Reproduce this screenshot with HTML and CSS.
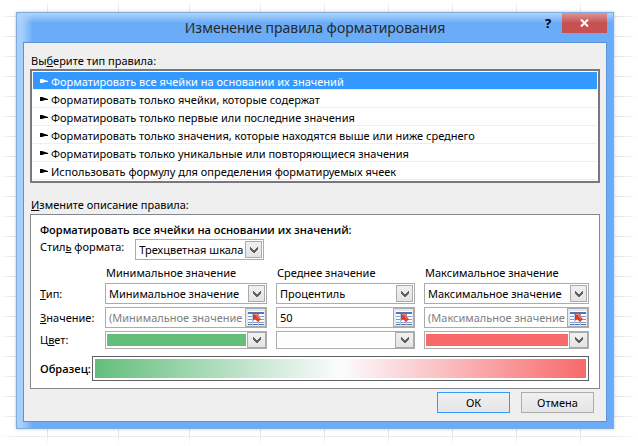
FILE: index.html
```html
<!DOCTYPE html>
<html lang="ru">
<head>
<meta charset="utf-8">
<title>Изменение правила форматирования</title>
<link rel="stylesheet" href="styles.css">
</head>
<body>
<svg class="defs" aria-hidden="true">
  <symbol id="tri" viewBox="0 0 9 5"><path d="M0 0H2L5 1L8 2V3H5L2 4H0Z" fill="currentColor"/></symbol>
  <symbol id="chevron" viewBox="0 0 8 6"><path d="M0 0H1V1H2V2H3V3H5V2H6V1H7V0H8V3H7V4H6V5H5V6H3V5H2V4H1V3H0Z" fill="#606060"/></symbol>
  <symbol id="range" viewBox="0 0 16 14">
    <rect width="16" height="14" fill="#fff"/>
    <path d="M0 1H16V3H0Z" fill="#4d76bd"/>
    <path d="M0 5.500H16M0 8.500H16M0 11.500H16" stroke="#7b9bd0"/>
    <path d="M0 13H16V14H0Z" fill="#4d6fae"/>
    <path d="M4.500 3V14M10.500 3V14" stroke="#b3c5e5"/>
    <path d="M5 3H11L10 5L13 8L10 11L7 8L5 10Z" fill="#dc3b22"/>
    <path d="M6 3.500H10L8.500 5L11 8" stroke="#f08a70" fill="none"/>
  </symbol>
</svg>
<main class="window">
  <header class="titlebar">
    <h1>Изменение правила форматирования</h1>
    <div class="caption-buttons">
      <button class="help" type="button" aria-label="Справка">?</button>
      <button class="close" type="button" aria-label="Закрыть"><svg width="9" height="8" viewBox="0 0 9 8"><path d="M1 0.500L8 7.500M8 0.500L1 7.500" stroke="#fff" stroke-width="2"/></svg></button>
    </div>
  </header>
  <form class="content">
    <h2 class="caption" id="rule-type">Вы<u>б</u>ерите тип правила:</h2>
    <ul class="rules" role="listbox" aria-labelledby="rule-type">
      <li class="rule selected" role="option" aria-selected="true"><svg><use href="#tri"/></svg>Форматировать все ячейки на основании их значений</li>
      <li class="rule" role="option"><svg><use href="#tri"/></svg>Форматировать только ячейки, которые содержат</li>
      <li class="rule" role="option"><svg><use href="#tri"/></svg>Форматировать только первые или последние значения</li>
      <li class="rule" role="option"><svg><use href="#tri"/></svg>Форматировать только значения, которые находятся выше или ниже среднего</li>
      <li class="rule" role="option"><svg><use href="#tri"/></svg>Форматировать только уникальные или повторяющиеся значения</li>
      <li class="rule" role="option"><svg><use href="#tri"/></svg>Использовать формулу для определения форматируемых ячеек</li>
    </ul>
    <h2 class="caption second"><u>И</u>змените описание правила:</h2>
    <section class="panel">
      <h3>Форматировать все ячейки на основании их значений:</h3>
      <div class="style-row">
        <label for="style">Стил<u>ь</u> формата:</label>
        <div class="combo"><select id="style"><option>Трехцветная шкала</option></select><span class="drop"><svg><use href="#chevron"/></svg></span></div>
      </div>
      <div class="scale">
        <span></span>
        <span class="col-head">Минимальное значение</span>
        <span class="col-head">Среднее значение</span>
        <span class="col-head">Максимальное значение</span>

        <label for="type-min"><u>Т</u>ип:</label>
        <div class="combo"><select id="type-min"><option>Минимальное значение</option></select><span class="drop"><svg><use href="#chevron"/></svg></span></div>
        <div class="combo"><select aria-label="Тип: среднее"><option>Процентиль</option></select><span class="drop"><svg><use href="#chevron"/></svg></span></div>
        <div class="combo"><select aria-label="Тип: максимальное"><option>Максимальное значение</option></select><span class="drop"><svg><use href="#chevron"/></svg></span></div>

        <label for="value-min"><u>З</u>начение:</label>
        <div class="ref"><input id="value-min" type="text" placeholder="(Минимальное значение)"><button type="button" aria-label="Выбрать диапазон"><svg><use href="#range"/></svg></button></div>
        <div class="ref"><input type="text" value="50" aria-label="Значение: среднее"><button type="button" aria-label="Выбрать диапазон"><svg><use href="#range"/></svg></button></div>
        <div class="ref"><input type="text" placeholder="(Максимальное значение)" aria-label="Значение: максимальное"><button type="button" aria-label="Выбрать диапазон"><svg><use href="#range"/></svg></button></div>

        <label for="color-min">Ц<u>в</u>ет:</label>
        <button class="color" id="color-min" type="button"><span class="swatch low"></span><span class="drop"><svg><use href="#chevron"/></svg></span></button>
        <button class="color" type="button" aria-label="Цвет: среднее"><span class="swatch mid"></span><span class="drop"><svg><use href="#chevron"/></svg></span></button>
        <button class="color" type="button" aria-label="Цвет: максимальное"><span class="swatch high"></span><span class="drop"><svg><use href="#chevron"/></svg></span></button>
      </div>
      <div class="sample-row">
        <strong>Образец:</strong>
        <div class="sample"></div>
      </div>
    </section>
    <footer class="actions">
      <button class="action default" type="button">ОК</button>
      <button class="action" type="button">Отмена</button>
    </footer>
  </form>
</main>
</body>
</html>
```
FILE: styles.css
```css
* { box-sizing: border-box; }

body {
  margin: 0;
  padding: 12px 24px 17px 16px;
  color: #000;
  font: 11px/16px "Noto Sans", "Open Sans", sans-serif;
  background:
    linear-gradient(#fff, #fff0 10px, #fff0 calc(100% - 14px), #fff),
    linear-gradient(90deg, #fff, #fff0 14px, #fff0 calc(100% - 22px), #fff),
    repeating-linear-gradient(#fff0 0 16px, #e2e2e2 16px 17px, #fff0 17px 20px),
    repeating-linear-gradient(90deg, #fff0 0 47px, #e2e2e2 47px 48px, #fff0 48px 71px) 0 0 / 261px 100% no-repeat,
    repeating-linear-gradient(90deg, #fff0 0 63px, #e2e2e2 63px 64px) 100% 0 / calc(100% - 261px) 100% no-repeat,
    #fff;
}

.defs { position: absolute; width: 0; height: 0; }

h1, h2, h3, ul { margin: 0; padding: 0; font: inherit; }
button, input, select { margin: 0; padding: 0; color: inherit; font: inherit; }
svg { display: block; }

.window {
  padding: 0 6px 6px;
  border: 1px solid #83abdc;
  background:
    linear-gradient(#b0d4fc, #6aacf700 10px),
    linear-gradient(90deg, #a6cffb 5px, #6aacf7 16px);
  box-shadow: 0 0 3px #b8c4d4;
}

.titlebar {
  display: grid;
  grid-template-columns: 1fr auto 1fr;
  height: 29px;
}
.titlebar h1 {
  grid-column: 2;
  color: #27292c;
  font-size: 14px;
  line-height: 30px;
}
.caption-buttons {
  display: flex;
  justify-content: flex-end;
  align-items: flex-start;
  gap: 4px;
}
.help { width: 20px; height: 20px; border: 0; background: none; font-size: 13px; font-weight: 700; }
.close {
  display: grid;
  place-items: center;
  width: 45px;
  height: 20px;
  border: 0;
  background: linear-gradient(#dc9799, #c75050 10px);
}

.content {
  padding: 10px 6px 8px;
  border: 1px solid #5a94d8;
  background: #efefef;
}
.caption { padding-left: 1px; }
.second { margin-top: 14px; }

.rules {
  padding: 1px;
  border: 2px solid #77777d;
  background: #fff;
  list-style: none;
}
.rule {
  display: flex;
  align-items: center;
  gap: 2px;
  height: 18px;
  padding: 1px 0 0 7px;
  border-bottom: 1px solid #efefef;
  line-height: 17px;
}
.rule svg { width: 9px; height: 5px; }
.selected { background: #3399ff; color: #fff; background-clip: padding-box; }

.panel {
  margin-top: 1px;
  padding: 7px 10px 7px 9px;
  border: 1px solid #828790;
  background: #fff;
}
.panel h3, .panel strong { font-family: "Open Sans", "Noto Sans", sans-serif; font-weight: 600; }
.style-row { display: flex; gap: 11px; margin-top: 1px; }
.style-row .combo { width: 129px; }

.combo {
  display: flex;
  align-items: center;
  position: relative;
  height: 21px;
  border: 1px solid #ababab;
  background: #fff;
}
.combo select {
  width: 100%;
  height: 100%;
  padding: 0 18px 0 3px;
  border: 0;
  background: none;
  appearance: none;
}
.drop {
  display: grid;
  place-items: center;
  flex: none;
  width: 17px;
  height: 17px;
  border: 1px solid #ababab;
  background: linear-gradient(#f0f0f0, #e4e4e4);
}
.drop svg { width: 8px; height: 6px; }
.combo .drop { position: absolute; right: 1px; pointer-events: none; }

.scale {
  display: grid;
  grid-template-columns: 56px minmax(0, 162fr) minmax(0, 139fr) minmax(0, 165fr);
  column-gap: 9px;
  row-gap: 3px;
  align-items: center;
  margin-top: 6px;
}
.scale label { white-space: nowrap; }
.col-head { padding-left: 1px; line-height: 14px; }

.ref { display: flex; height: 21px; border: 1px solid #ababab; background: #fff; }
.ref input { flex: 1; min-width: 0; padding: 0 2px 0 3px; border: 0; background: none; }
.ref input::placeholder { color: #808080; opacity: 1; }
.ref button {
  display: grid;
  place-items: center;
  width: 21px;
  border: 1px solid #ababab;
  background: #e8e8e8;
}
.ref svg { width: 16px; height: 14px; }

.color { display: flex; align-items: stretch; height: 18px; border: 1px solid #ababab; background: #fff; }
.color .drop { width: 19px; height: 16px; }
.swatch { flex: 1; margin: 2px 1px; }
.low { background: #63be7b; }
.mid { background: #fcfcff; }
.high { background: #f8696b; }

.sample-row { display: flex; align-items: center; gap: 1px; margin-top: 7px; }
.sample {
  flex: 1;
  height: 25px;
  padding: 2px;
  border: 1px solid #606060;
  background: linear-gradient(90deg, #63be7b, #fcfcff, #f8696b) content-box;
}

.actions { display: flex; justify-content: flex-end; gap: 11px; padding: 3px 6px 0 0; }
.action { width: 73px; height: 21px; border: 1px solid #acacac; background: linear-gradient(#f0f0f0, #e5e5e5); }
.default { border-color: #3399ff; }
```
